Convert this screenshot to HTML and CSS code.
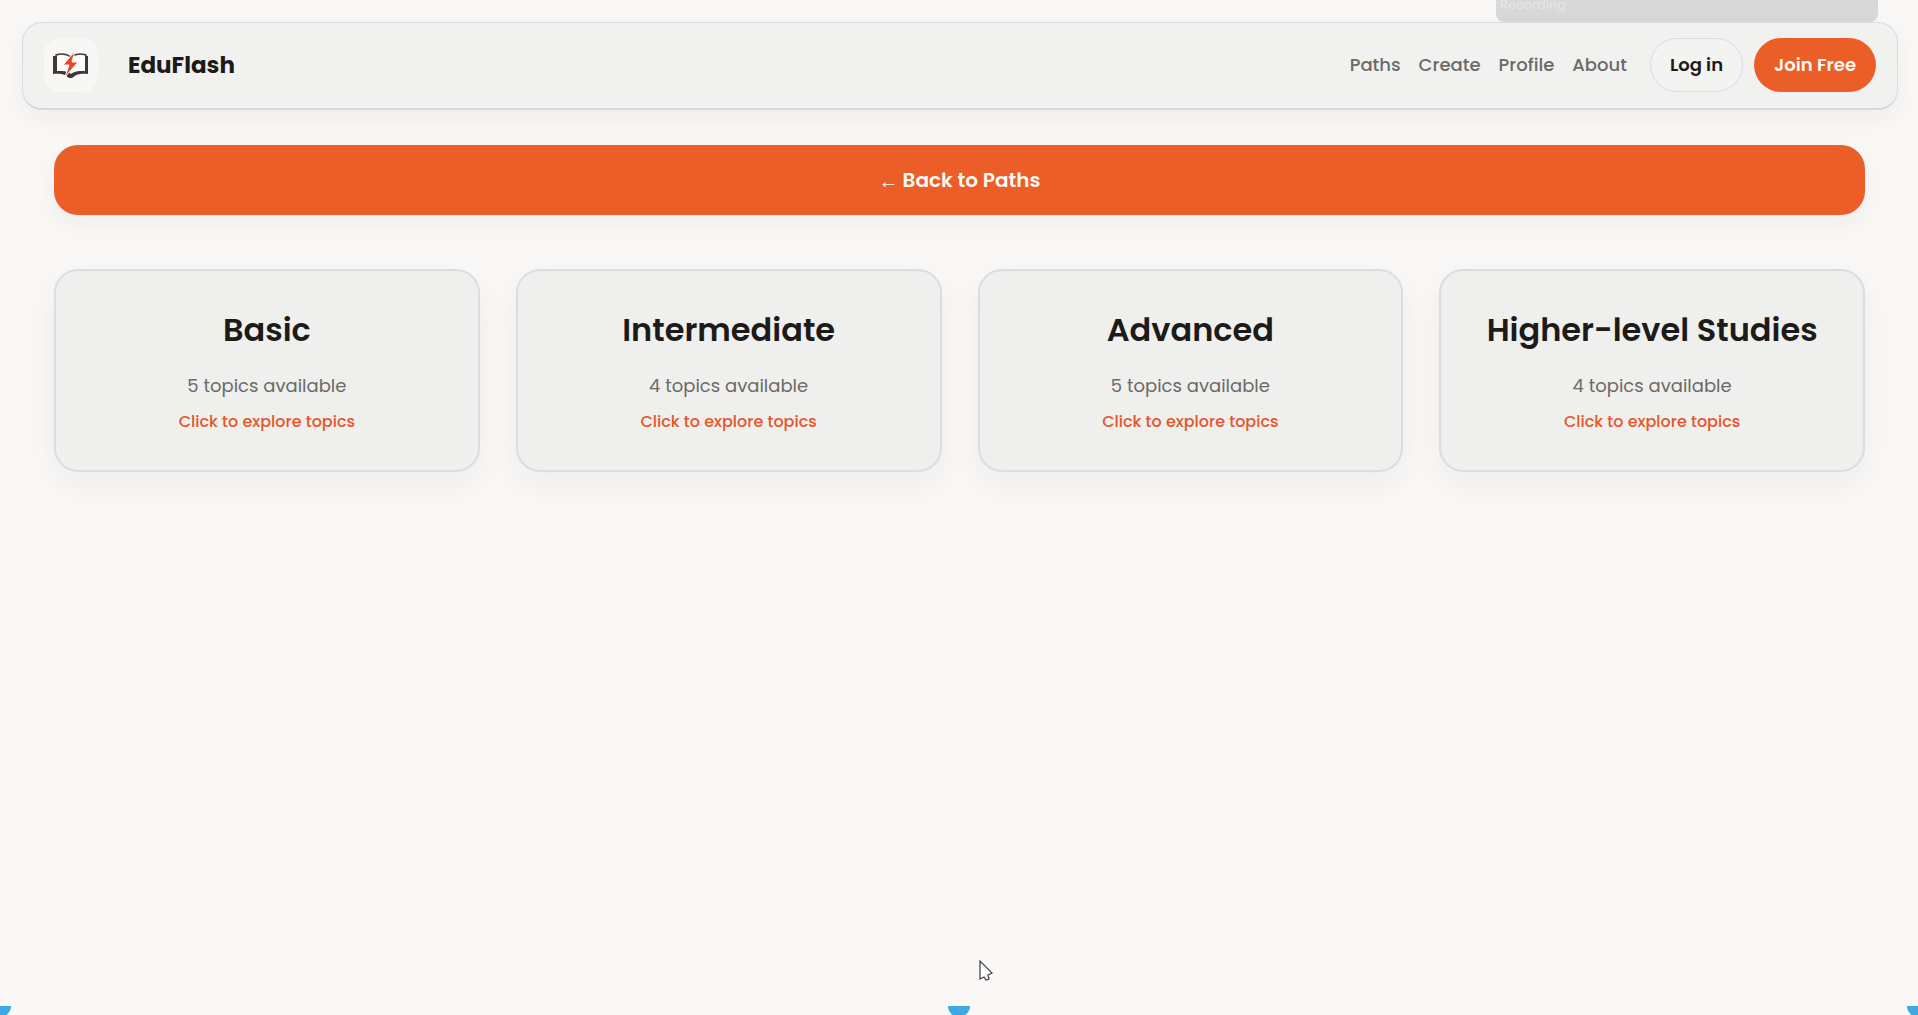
FILE: index.html
```html
<!DOCTYPE html>
<html lang="en">
<head>
<meta charset="utf-8">
<title>EduFlash</title>
<link rel="stylesheet" href="styles.css">
</head>
<body>
<div class="notice">Recording</div>
<header class="navbar">
  <a class="brand" href="#">
    <span class="brand-mark">
      <svg width="36" height="28" viewBox="0 0 36 28" aria-hidden="true">
        <path d="M3 4C9 2 14 3 18 6C22 3 27 2 33 4V21C27 20 22 21 18 24C14 21 9 20 3 21Z" fill="#fcfbfc" stroke="#3d3936" stroke-width="1.4"/>
        <path d="M0 5H4V20C10 20 14 20 18 23C22 20 26 20 32 20V5H35V23C28 22 23 23 19 27H16C12 23 8 22 0 23Z" fill="#3d3936"/>
        <path d="M22 0L10 14H16L12 26L25 11H19Z" fill="#e8481f" stroke="#fcfbfc" stroke-width="1"/>
      </svg>
    </span>
    <span class="brand-name">EduFlash</span>
  </a>
  <nav class="nav-links">
    <a href="#">Paths</a>
    <a href="#">Create</a>
    <a href="#">Profile</a>
    <a href="#">About</a>
  </nav>
  <div class="nav-actions">
    <button class="button button-outline" type="button">Log in</button>
    <button class="button button-primary" type="button">Join Free</button>
  </div>
</header>
<main class="content">
  <button class="back" type="button"><span class="back-arrow">←</span>Back to Paths</button>
  <div class="levels">
    <a class="card" href="#"><h2>Basic</h2><p class="count">5 topics available</p><p class="hint">Click to explore topics</p></a>
    <a class="card" href="#"><h2>Intermediate</h2><p class="count">4 topics available</p><p class="hint">Click to explore topics</p></a>
    <a class="card" href="#"><h2>Advanced</h2><p class="count">5 topics available</p><p class="hint">Click to explore topics</p></a>
    <a class="card" href="#"><h2>Higher-level Studies</h2><p class="count">4 topics available</p><p class="hint">Click to explore topics</p></a>
  </div>
</main>
<div class="handles" aria-hidden="true"><i></i><i></i><i></i></div>
<svg class="cursor" width="16" height="24" viewBox="0 0 16 24" aria-hidden="true">
  <path d="M2 2V20L6 18L8 21L11 20L10 16L14 14Z" fill="#fdfdfd" stroke="#4b4648" stroke-width="1.3"/>
</svg>
</body>
</html>
```
FILE: styles.css
```css
* { box-sizing: border-box; }

body {
  position: relative;
  min-height: 100vh;
  margin: 0;
  padding: 22px 20px 0 22px;
  overflow: hidden;
  background: #f9f8f6;
  color: #1c1b19;
  font-family: Poppins, Inter, "Noto Sans", sans-serif;
  font-size: 18px;
  line-height: 28px;
}

a { color: inherit; text-decoration: none; }
button { font: inherit; cursor: pointer; }
h2, p { margin: 0; }

.notice {
  position: absolute;
  top: -8px;
  right: 40px;
  width: 382px;
  height: 30px;
  padding-left: 4px;
  border-radius: 8px;
  background: #d8d8d9;
  color: #e6e6e2;
  font-size: 13px;
  line-height: 26px;
}

.navbar {
  position: relative;
  display: flex;
  align-items: center;
  min-height: 88px;
  padding: 14px 21px 16px;
  border: 1px solid #dadae3;
  border-bottom: 2px solid #d8d7df;
  border-radius: 20px;
  background: #f1f1f0;
  box-shadow: 0 8px 24px rgba(30, 30, 40, .05);
}

.brand { display: flex; align-items: center; gap: 30px; }

.brand-mark {
  display: grid;
  place-items: center;
  width: 54px;
  height: 54px;
  border-radius: 16px;
  background: #f8f7f5;
}

.brand-name { font-size: 23px; font-weight: 700; }

.nav-links {
  display: flex;
  gap: 18px;
  margin-left: auto;
  color: #6b6a67;
  font-weight: 500;
}

.nav-actions { display: flex; gap: 11px; margin-left: 23px; }

.button {
  height: 54px;
  padding: 0 19px;
  border: 1px solid transparent;
  border-radius: 27px;
  font-weight: 600;
}

.button-outline { border-color: #dadae3; background: #f3f3f2; color: #1c1b19; }
.button-primary { background: #eb5e28; color: #fff9f5; }

.content { padding: 35px 33px 0 32px; }

.back {
  display: flex;
  align-items: center;
  justify-content: center;
  gap: 4px;
  width: 100%;
  height: 70px;
  border: 0;
  border-radius: 24px;
  background: #eb5e28;
  box-shadow: 0 8px 24px rgba(30, 30, 40, .05);
  color: #fff9f5;
  font-size: 20px;
  font-weight: 600;
}

.back-arrow {
  padding-top: 2px;
  font-family: "Liberation Sans", sans-serif;
  font-weight: 400;
}

.levels {
  display: grid;
  grid-template-columns: repeat(4, 1fr);
  gap: 36px;
  margin-top: 54px;
}

.card {
  padding: 35px 24px 34px;
  border: 2px solid #dcdce2;
  border-radius: 24px;
  background: #efefee;
  box-shadow: 0 12px 32px rgba(30, 30, 40, .05);
  text-align: center;
}

.card h2 { font-size: 32px; line-height: 48px; font-weight: 600; }
.count { margin-top: 18px; color: #6b6a67; font-size: 18px; }
.hint { margin-top: 8px; color: #e4572b; font-size: 16px; font-weight: 500; }

.handles {
  position: absolute;
  right: -11px;
  bottom: 0;
  left: -11px;
  display: flex;
  justify-content: space-between;
  height: 9px;
  overflow: hidden;
}

.handles i { width: 22px; height: 11px; border-radius: 0 0 11px 11px; background: #3da9e0; }

.cursor { position: absolute; left: 51%; bottom: 32px; }
```
